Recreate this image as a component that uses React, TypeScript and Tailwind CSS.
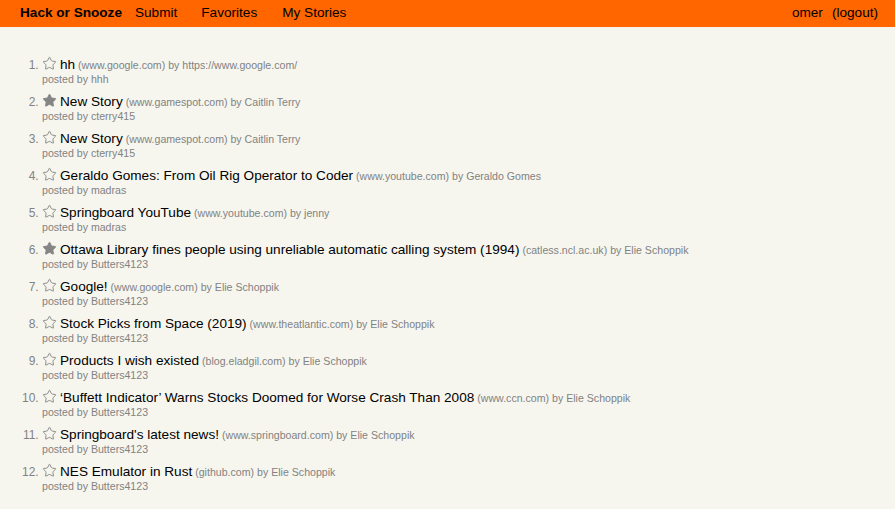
import { Star } from 'lucide-react'

type Story = {
  title: string
  host: string
  author: string
  user: string
  fav?: boolean
}

const stories: Story[] = [
  { title: 'hh', host: 'www.google.com', author: 'https://www.google.com/', user: 'hhh' },
  { title: 'New Story', host: 'www.gamespot.com', author: 'Caitlin Terry', user: 'cterry415', fav: true },
  { title: 'New Story', host: 'www.gamespot.com', author: 'Caitlin Terry', user: 'cterry415' },
  { title: 'Geraldo Gomes: From Oil Rig Operator to Coder', host: 'www.youtube.com', author: 'Geraldo Gomes', user: 'madras' },
  { title: 'Springboard YouTube', host: 'www.youtube.com', author: 'jenny', user: 'madras' },
  { title: 'Ottawa Library fines people using unreliable automatic calling system (1994)', host: 'catless.ncl.ac.uk', author: 'Elie Schoppik', user: 'Butters4123', fav: true },
  { title: 'Google!', host: 'www.google.com', author: 'Elie Schoppik', user: 'Butters4123' },
  { title: 'Stock Picks from Space (2019)', host: 'www.theatlantic.com', author: 'Elie Schoppik', user: 'Butters4123' },
  { title: 'Products I wish existed', host: 'blog.eladgil.com', author: 'Elie Schoppik', user: 'Butters4123' },
  { title: '\u2018Buffett Indicator\u2019 Warns Stocks Doomed for Worse Crash Than 2008', host: 'www.ccn.com', author: 'Elie Schoppik', user: 'Butters4123' },
  { title: "Springboard's latest news!", host: 'www.springboard.com', author: 'Elie Schoppik', user: 'Butters4123' },
  { title: 'NES Emulator in Rust', host: 'github.com', author: 'Elie Schoppik', user: 'Butters4123' },
]

export default function App() {
  return (
    <div className="min-h-[509px] bg-[#f6f6ef] font-['Liberation_Sans',Arial,sans-serif] text-black">
      <nav className="flex h-[27px] items-center bg-[#ff6600] pl-[20px] pr-[17px] text-[13.6px]">
        <a className="mr-[13px] font-bold">Hack or Snooze</a>
        <a className="mr-[24px]">Submit</a>
        <a className="mr-[25px]">Favorites</a>
        <a>My Stories</a>
        <div className="ml-auto flex gap-[9px]">
          <span>omer</span>
          <span>(logout)</span>
        </div>
      </nav>

      <ol className="list-decimal pl-[42px] pt-[29px] text-[10.6px] text-[#828282] marker:text-[12px]">
        {stories.map((s, i) => (
          <li key={i} className="mb-[8px]">
            <div className="h-[16px] whitespace-nowrap leading-[16px]">
              <Star
                size={15}
                strokeWidth={1.5}
                className="mr-[3px] inline-block align-[-2px] text-[#858585]"
                fill={s.fav ? 'currentColor' : 'none'}
              />
              <span className="text-[13.6px] text-black">{s.title}</span>{' '}
              <span>({s.host})</span> <span>by {s.author}</span>
            </div>
            <div className="mt-[1px] h-[12px] leading-[12px]">posted by {s.user}</div>
          </li>
        ))}
      </ol>
    </div>
  )
}
